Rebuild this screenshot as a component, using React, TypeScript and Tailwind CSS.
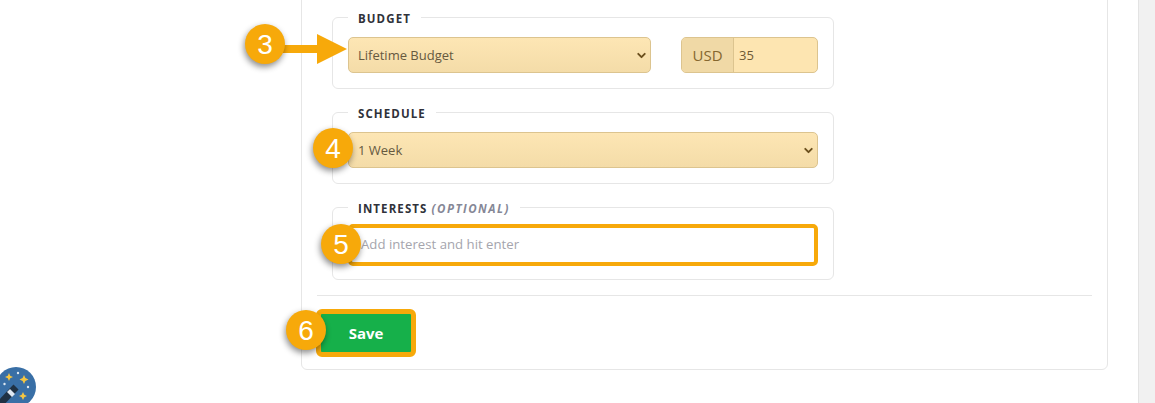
import React from 'react';
import { ChevronDown } from 'lucide-react';

function Badge({ n, className }: { n: number; className: string }) {
  return (
    <div
      className={`absolute z-10 flex h-10 w-10 items-center justify-center rounded-full bg-[#f7a90a] pt-[2px] font-['Liberation_Sans',sans-serif] text-[28px] leading-none text-white shadow-[-1px_3px_6px_rgba(0,0,0,0.45)] ${className}`}
    >
      {n}
    </div>
  );
}

function Group({ legend, compact, children }: { legend: React.ReactNode; compact?: boolean; children: React.ReactNode }) {
  return (
    <fieldset className={`relative rounded-md border border-[#e6e6e6] px-[15px] ${compact ? 'pb-[13px] pt-[8px]' : 'pb-[15px] pt-[11px]'}`}>
      <legend className="h-[18px] px-[10px] text-[11.5px] font-bold leading-[22px] tracking-[1.1px] text-[#30323a]">
        {legend}
      </legend>
      {children}
    </fieldset>
  );
}

function Select({ value, className }: { value: string; className: string }) {
  return (
    <div className={`relative h-9 ${className}`}>
      <select className="h-full w-full appearance-none rounded-[5px] border border-[#dcc48f] bg-gradient-to-b from-[#fde6b4] to-[#f4dca8] pl-[9px] pt-[2px] text-[13px] text-[#66593f]">
        <option>{value}</option>
      </select>
      <ChevronDown size={13} strokeWidth={3.5} className="pointer-events-none absolute right-[3px] top-[12px] text-[#6b4f1d]" />
    </div>
  );
}

export default function App() {
  return (
    <div className="relative flex h-[403px] w-[1155px] overflow-hidden bg-white font-['Open_Sans',sans-serif]">
      <main className="flex-1 pl-[301px]">
        <div className="relative mt-[-21px] h-[391px] w-[807px] rounded-md border border-[#e6e6e6] pl-[15px] pr-[15px] pt-[28px]">
          <div className="flex flex-col gap-[14px] pl-[15px] pr-[258px]">
            <Group legend="BUDGET">
              <Badge n={3} className="left-[-88px] top-[-2px]" />
              {/* arrow from the badge to the select */}
              <svg className="absolute left-[-50px] top-[7px] z-0" width="66" height="32" viewBox="0 0 66 32">
                <path d="M0 12h34V1l30 15-30 15V20H0z" fill="#f7a90a" />
              </svg>
              <div className="flex items-center gap-[30px]">
                <Select value="Lifetime Budget" className="w-[303px]" />
                <div className="flex h-9 w-[137px] overflow-hidden rounded-[5px] border border-[#dcc48f] bg-[#fde5b1]">
                  <span className="flex w-[52px] items-center justify-center border-r border-[#dcc48f] bg-[#f0d9a6] text-[15px] text-[#85672f]">
                    USD
                  </span>
                  <input
                    readOnly
                    value="35"
                    className="min-w-0 flex-1 bg-transparent pl-[5px] pt-[2px] text-[13px] text-[#6e5a36] outline-none"
                  />
                </div>
              </div>
            </Group>
            <Group legend="SCHEDULE">
              <Badge n={4} className="left-[-20px] top-[7px]" />
              <Select value="1 Week" className="w-full" />
            </Group>
            <Group
              compact
              legend={
                <>
                  INTERESTS <em className="tracking-[1.5px] text-[#858796]">(OPTIONAL)</em>
                </>
              }
            >
              <Badge n={5} className="left-[-12px] top-[8px]" />
              <input
                readOnly
                placeholder="Add interest and hit enter"
                className="h-[42px] w-full rounded-[5px] border-4 border-[#f7a90a] pb-[2px] pl-[9px] text-[13.2px] outline-none placeholder:text-[#a5a5ad]"
              />
            </Group>
          </div>
          <hr className="mt-[15px] border-[#e6e6e6]" />
          <div className="relative mt-[13px]">
            <Badge n={6} className="left-[-31px] top-[1px]" />
            <button className="ml-[-1px] h-12 w-[100px] rounded-[6px] border-[5px] border-[#f7a90a] bg-[#16b04a] text-[15px] font-bold text-white">
              Save
            </button>
          </div>
        </div>
      </main>
      <aside className="h-full w-[17px] border-l border-[#e3e3e3] bg-[#f1f1f1]" />
      {/* floating help button */}
      <svg className="absolute left-[-4px] top-[367px]" width="40" height="40" viewBox="0 0 40 40">
        <circle cx="20" cy="20" r="20" fill="#396fa6" />
        <path d="M3 38 20 20" stroke="#1f3144" strokeWidth="7" />
        <path d="M13.500 27.500 16.500 24.500" stroke="#dfe8f2" strokeWidth="7" />
        <path d="M13 6l1.200 2.800 2.800 1.200-2.800 1.200-1.200 2.800-1.200-2.800-2.800-1.200 2.800-1.200zM28 8l1.400 3.100 3.100 1.400-3.100 1.400-1.400 3.100-1.400-3.100-3.100-1.400 3.100-1.400zM27 25l1.300 2.700 2.700 1.300-2.700 1.300-1.300 2.700-1.300-2.700-2.700-1.300 2.700-1.300z" fill="#f4c542" />
        <circle cx="8.500" cy="17" r="1.200" fill="#dfe8f2" />
        <circle cx="22" cy="6" r="1.200" fill="#dfe8f2" />
        <circle cx="32" cy="20" r="1.200" fill="#dfe8f2" />
      </svg>
    </div>
  );
}
